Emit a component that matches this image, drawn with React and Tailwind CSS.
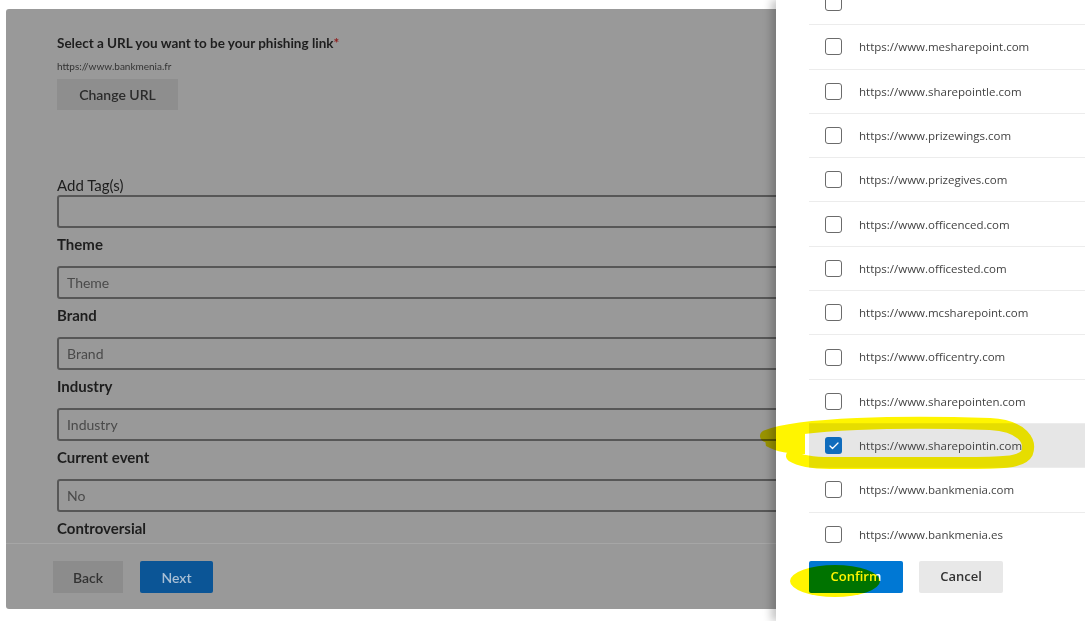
import { Check } from 'lucide-react';

const urls = [
    "",
    "https://www.mesharepoint.com",
    "https://www.sharepointle.com",
    "https://www.prizewings.com",
    "https://www.prizegives.com",
    "https://www.officenced.com",
    "https://www.officested.com",
    "https://www.mcsharepoint.com",
    "https://www.officentry.com",
    "https://www.sharepointen.com",
    "https://www.sharepointin.com",
    "https://www.bankmenia.com",
    "https://www.bankmenia.es",
];

const selected = "https://www.sharepointin.com";

// Dimmed form field with bold label
const Field = ({ label, value }) => (
    <div>
        <div className="mt-[6px] h-[20px] leading-[20px] text-[15px] font-bold text-[#1e1e1e]">{label}</div>
        <div className="mt-[12px] h-[33px] border-2 border-[#575757] rounded-[3px] flex items-center px-[8px] text-[14px] text-[#4a4a4a]">
            {value}
        </div>
    </div>
);

const UrlRow = ({ url, last }) => {
    const checked = url === selected;
    return (
        <div className={`h-[44.3px] shrink-0 flex items-center ${last ? "" : "border-b border-[#ececec]"} ${checked ? "bg-[#e6e6e6]" : ""}`}>
            {checked ? (
                <div className="ml-[16px] w-[17px] h-[17px] rounded-[3px] bg-[#0f6cbd] flex items-center justify-center">
                    <Check size={12} strokeWidth={2.5} className="text-white" />
                </div>
            ) : (
                <div className="ml-[16px] w-[17px] h-[17px] rounded-[3px] border-[1.5px] border-[#6b6b6b] bg-white"></div>
            )}
            <span className="ml-[17px] text-[11.5px] text-[#424242]">{url}</span>
        </div>
    );
};

export default function App() {
    return (
        <div className="relative w-[1090px] h-[621px] overflow-hidden bg-white pl-[6px] pt-[9px]" style={{ fontFamily: "Lato, 'Open Sans', sans-serif" }}>

            {/* Dimmed page behind the drawer */}
            <div className="w-[1078px] h-[600px] bg-[#999999] rounded-[3px] flex flex-col">
                <div className="h-[534px] overflow-hidden px-[51px] pt-[26px]">
                    <div className="h-[16px] leading-[16px] text-[13.5px] font-bold text-[#1e1e1e]">
                        Select a URL you want to be your phishing link<span className="text-[#8f1d1d]">*</span>
                    </div>
                    <div className="mt-[9px] h-[12px] leading-[12px] text-[10px] text-[#333]">https://www.bankmenia.fr</div>
                    <button className="mt-[7px] w-[121px] h-[31px] bg-[#8e8e8e] text-[14px] font-semibold text-[#2b2b2b]">Change URL</button>

                    <div className="mt-[66px] h-[19px] leading-[19px] text-[15px] text-[#1e1e1e]">Add Tag(s)</div>
                    <div className="h-[33px] border-2 border-[#575757] rounded-[3px]"></div>

                    <Field label="Theme" value="Theme" />
                    <Field label="Brand" value="Brand" />
                    <Field label="Industry" value="Industry" />
                    <Field label="Current event" value="No" />
                    <div className="mt-[6px] h-[20px] leading-[20px] text-[15px] font-bold text-[#1e1e1e]">Controversial</div>
                </div>

                {/* Footer */}
                <div className="flex-1 border-t border-[#a6a6a6] px-[47px] pt-[17px] flex gap-[17px]">
                    <button className="w-[70px] h-[32px] bg-[#8c8c8c] text-[14px] font-semibold text-[#333]">Back</button>
                    <button className="w-[73px] h-[32px] bg-[#0b5596] rounded-[2px] text-[14px] font-semibold text-[#a8bfd5]">Next</button>
                </div>
            </div>

            {/* Drawer */}
            <div className="absolute top-0 right-0 w-[314px] h-full bg-white shadow-[-5px_0_8px_rgba(0,0,0,0.22)] flex flex-col overflow-hidden pl-[33px] pr-[5px]" style={{ fontFamily: "'Open Sans', 'Noto Sans', sans-serif" }}>
                <div className="-mt-[19px] flex flex-col">
                    {urls.map((u, i) => (
                        <UrlRow key={i} url={u} last={i === urls.length - 1} />
                    ))}
                </div>
                <div className="mt-[4px] flex gap-[16px]">
                    <button className="w-[94px] h-[32px] bg-[#0078d4] rounded-[2px] text-[13px] font-semibold text-white">Confirm</button>
                    <button className="w-[84px] h-[32px] bg-[#e8e8e8] rounded-[2px] text-[13px] font-semibold text-[#333]">Cancel</button>
                </div>
            </div>

            {/* Highlighter marks */}
            <svg className="absolute inset-0 pointer-events-none mix-blend-multiply" width="1090" height="621" viewBox="0 0 1090 621">
                <path
                    d="M 766 436 C 800 423, 900 421, 990 424 C 1024 426, 1031 442, 1027 453 C 1022 463, 1000 463, 960 463 L 830 463 C 812 463, 800 461, 792 456"
                    fill="none"
                    stroke="#fff500"
                    strokeWidth="12"
                    strokeLinecap="round"
                />
                <path d="M 764 434 C 775 428, 790 426, 805 426 L 805 454 C 790 454, 776 452, 766 446 Z" fill="#fff500" />
                <ellipse cx="835" cy="581" rx="45" ry="16" fill="#fff500" />
            </svg>
        </div>
    );
}
